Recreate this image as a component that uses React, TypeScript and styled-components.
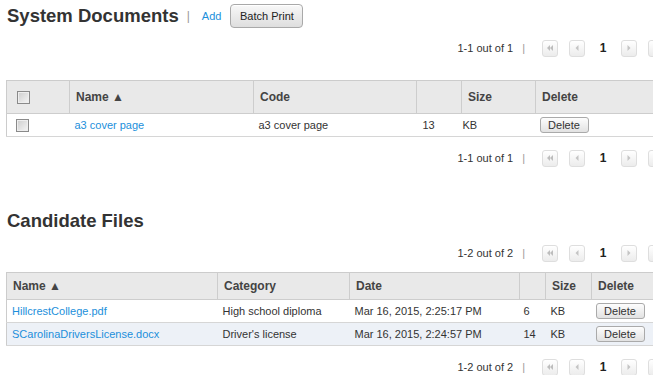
import React from 'react';
import styled, { createGlobalStyle } from 'styled-components';

const GlobalStyle = createGlobalStyle`
  html, body {
    margin: 0;
    padding: 0;
    background: #fff;
    overflow: hidden;
  }
  body {
    font-family: "Liberation Sans", Arial, sans-serif;
    color: #333;
  }
`;

type Col = { width: number };

const systemCols: Col[] = [
  { width: 63 },
  { width: 184 },
  { width: 163 },
  { width: 45 },
  { width: 74 },
  { width: 129 },
];

const candidateCols: Col[] = [
  { width: 211 },
  { width: 132 },
  { width: 170 },
  { width: 26 },
  { width: 46 },
  { width: 73 },
];

const candidateFiles = [
  {
    name: 'HillcrestCollege.pdf',
    category: 'High school diploma',
    date: 'Mar 16, 2015, 2:25:17 PM',
    size: '6',
  },
  {
    name: 'SCarolinaDriversLicense.docx',
    category: "Driver's license",
    date: 'Mar 16, 2015, 2:24:57 PM',
    size: '14',
  },
];

const PagerIcon: React.FC<{ dir: 'first' | 'prev' | 'next' | 'last' }> = ({ dir }) => {
  const left = dir === 'first' || dir === 'prev';
  const double = dir === 'first' || dir === 'last';
  const tri = (x: number) =>
    left ? `M${x + 3} 0 L${x} 3 L${x + 3} 6 Z` : `M${x} 0 L${x + 3} 3 L${x} 6 Z`;
  return (
    <svg width='8' height='6' viewBox='0 0 8 6'>
      {double ? (
        <>
          <path d={tri(1)} fill='#bdbdbd' />
          <path d={tri(4)} fill='#bdbdbd' />
        </>
      ) : (
        <path d={tri(2.5)} fill='#c4c4c4' />
      )}
    </svg>
  );
};

const PagerBar: React.FC<{ label: string; top: number }> = ({ label, top }) => (
  <Pager $top={top}>
    <PagerText>{label}</PagerText>
    <PagerSep>|</PagerSep>
    <PageButton><PagerIcon dir='first' /></PageButton>
    <PageButton $gap={11}><PagerIcon dir='prev' /></PageButton>
    <PageNumber>1</PageNumber>
    <PageButton><PagerIcon dir='next' /></PageButton>
    <PageButton $gap={11}><PagerIcon dir='last' /></PageButton>
  </Pager>
);

const App: React.FC = () => (
  <Page>
    <GlobalStyle />
    <TitleRow>
      <Title>System Documents</Title>
      <TitleSep>|</TitleSep>
      <Link href='#'>Add</Link>
      <BatchButton>Batch Print</BatchButton>
    </TitleRow>

    <PagerBar label='1-1 out of 1' top={10} />

    <Table $top={22}>
      <colgroup>
        {systemCols.map((c, i) => <col key={i} style={{ width: c.width }} />)}
      </colgroup>
      <thead>
        <tr>
          <Th $height={32}><Check /></Th>
          <Th $height={32}>Name ▲</Th>
          <Th $height={32}>Code</Th>
          <Th $height={32} />
          <Th $height={32}>Size</Th>
          <Th $height={32}>Delete</Th>
        </tr>
      </thead>
      <tbody>
        <tr>
          <Td><Check /></Td>
          <Td><Link href='#'>a3 cover page</Link></Td>
          <Td>a3 cover page</Td>
          <Td $pad={6}>13</Td>
          <Td $pad={1}>KB</Td>
          <Td $pad={4}><DeleteButton>Delete</DeleteButton></Td>
        </tr>
      </tbody>
    </Table>

    <PagerBar label='1-1 out of 1' top={11} />

    <Heading>Candidate Files</Heading>

    <PagerBar label='1-2 out of 2' top={12} />

    <Table $top={9}>
      <colgroup>
        {candidateCols.map((c, i) => <col key={i} style={{ width: c.width }} />)}
      </colgroup>
      <thead>
        <tr>
          <Th $height={26}>Name ▲</Th>
          <Th $height={26}>Category</Th>
          <Th $height={26}>Date</Th>
          <Th $height={26} />
          <Th $height={26}>Size</Th>
          <Th $height={26}>Delete</Th>
        </tr>
      </thead>
      <tbody>
        {candidateFiles.map((f, i) => (
          <Row key={f.name} $alt={i % 2 === 1}>
            <Td>{<Link href='#'>{f.name}</Link>}</Td>
            <Td>{f.category}</Td>
            <Td>{f.date}</Td>
            <Td $pad={4}>{f.size}</Td>
            <Td $pad={5}>KB</Td>
            <Td $pad={4}><DeleteButton>Delete</DeleteButton></Td>
          </Row>
        ))}
      </tbody>
    </Table>

    <PagerBar label='1-2 out of 2' top={11} />
  </Page>
);
export default App;

const Page = styled.div`
  width: 658px;
  padding: 4px 0 0 6px;
`;

const TitleRow = styled.div`
  display: flex;
  align-items: center;
  height: 24px;
  padding-left: 1px;
`;

const Title = styled.h1`
  margin: 0;
  font-size: 18.5px;
  font-weight: bold;
  color: #333;
  line-height: 24px;
`;

const TitleSep = styled.span`
  margin-left: 8px;
  font-size: 12px;
  color: #999;
`;

const Link = styled.a`
  color: #1c8fdb;
  text-decoration: none;
  font-size: 11px;

  ${TitleRow} & {
    margin-left: 12px;
  }
`;

const BatchButton = styled.button`
  margin-left: 9px;
  width: 73px;
  height: 24px;
  padding: 0;
  font-family: inherit;
  font-size: 11px;
  color: #222;
  border: 1px solid #a9a9a9;
  border-radius: 4px;
  background: linear-gradient(#f8f8f8, #dedede);
  box-shadow: inset 0 1px 0 #fff;
`;

const Pager = styled.div<{ $top: number }>`
  display: flex;
  justify-content: flex-end;
  align-items: center;
  height: 20px;
  margin-top: ${(p) => p.$top}px;
  font-size: 11px;
  color: #333;
`;

const PagerText = styled.span``;

const PagerSep = styled.span`
  margin: 0 17px 0 9px;
  color: #999;
`;

const PageButton = styled.span<{ $gap?: number }>`
  display: flex;
  align-items: center;
  justify-content: center;
  box-sizing: border-box;
  width: 16px;
  height: 17px;
  margin-left: ${(p) => p.$gap ?? 0}px;
  border: 1px solid #dedede;
  border-radius: 3px;
  background: linear-gradient(#ffffff, #ececec);
`;

const PageNumber = styled.span`
  width: 36px;
  text-align: center;
  font-weight: bold;
  font-size: 12px;
  color: #222;
`;

const Table = styled.table<{ $top: number }>`
  width: 100%;
  margin-top: ${(p) => p.$top}px;
  border-collapse: collapse;
  table-layout: fixed;
  border: 1px solid #cccccc;
  border-right: none;
`;

const Th = styled.th<{ $height: number }>`
  height: ${(p) => p.$height}px;
  padding: 0 6px;
  text-align: left;
  vertical-align: middle;
  font-size: 12px;
  font-weight: bold;
  color: #444;
  background: #e9e9e9;
  border-left: 1px solid #cdcdcd;
  border-bottom: 1px solid #cdcdcd;
  white-space: nowrap;

  &:first-child {
    border-left: none;
  }
`;

const Row = styled.tr<{ $alt?: boolean }>`
  background: ${(p) => (p.$alt ? '#edf1f7' : '#fff')};
`;

const Td = styled.td<{ $pad?: number }>`
  height: 22px;
  padding: 0 0 0 ${(p) => p.$pad ?? 5}px;
  font-size: 11px;
  color: #333;
  border-bottom: 1px solid #d6d6d6;
  white-space: nowrap;
  vertical-align: middle;
`;

const Check = styled.span`
  display: block;
  box-sizing: border-box;
  width: 13px;
  height: 13px;
  margin-left: 4px;
  border: 1px solid #8a8a8a;
  background: linear-gradient(135deg, #cdcdcd, #f5f5f5);
  box-shadow: inset 0 0 0 1px #eee;
`;

const DeleteButton = styled.button`
  display: block;
  width: 49px;
  height: 16px;
  padding: 0;
  font-family: inherit;
  font-size: 11px;
  line-height: 14px;
  color: #333;
  border: 1px solid #aaa;
  border-radius: 3px;
  background: linear-gradient(#fdfdfd, #e2e2e2);
`;

const Heading = styled.h2`
  margin: 42px 0 0 1px;
  font-size: 18.5px;
  line-height: 21px;
  font-weight: bold;
  color: #333;
`;
